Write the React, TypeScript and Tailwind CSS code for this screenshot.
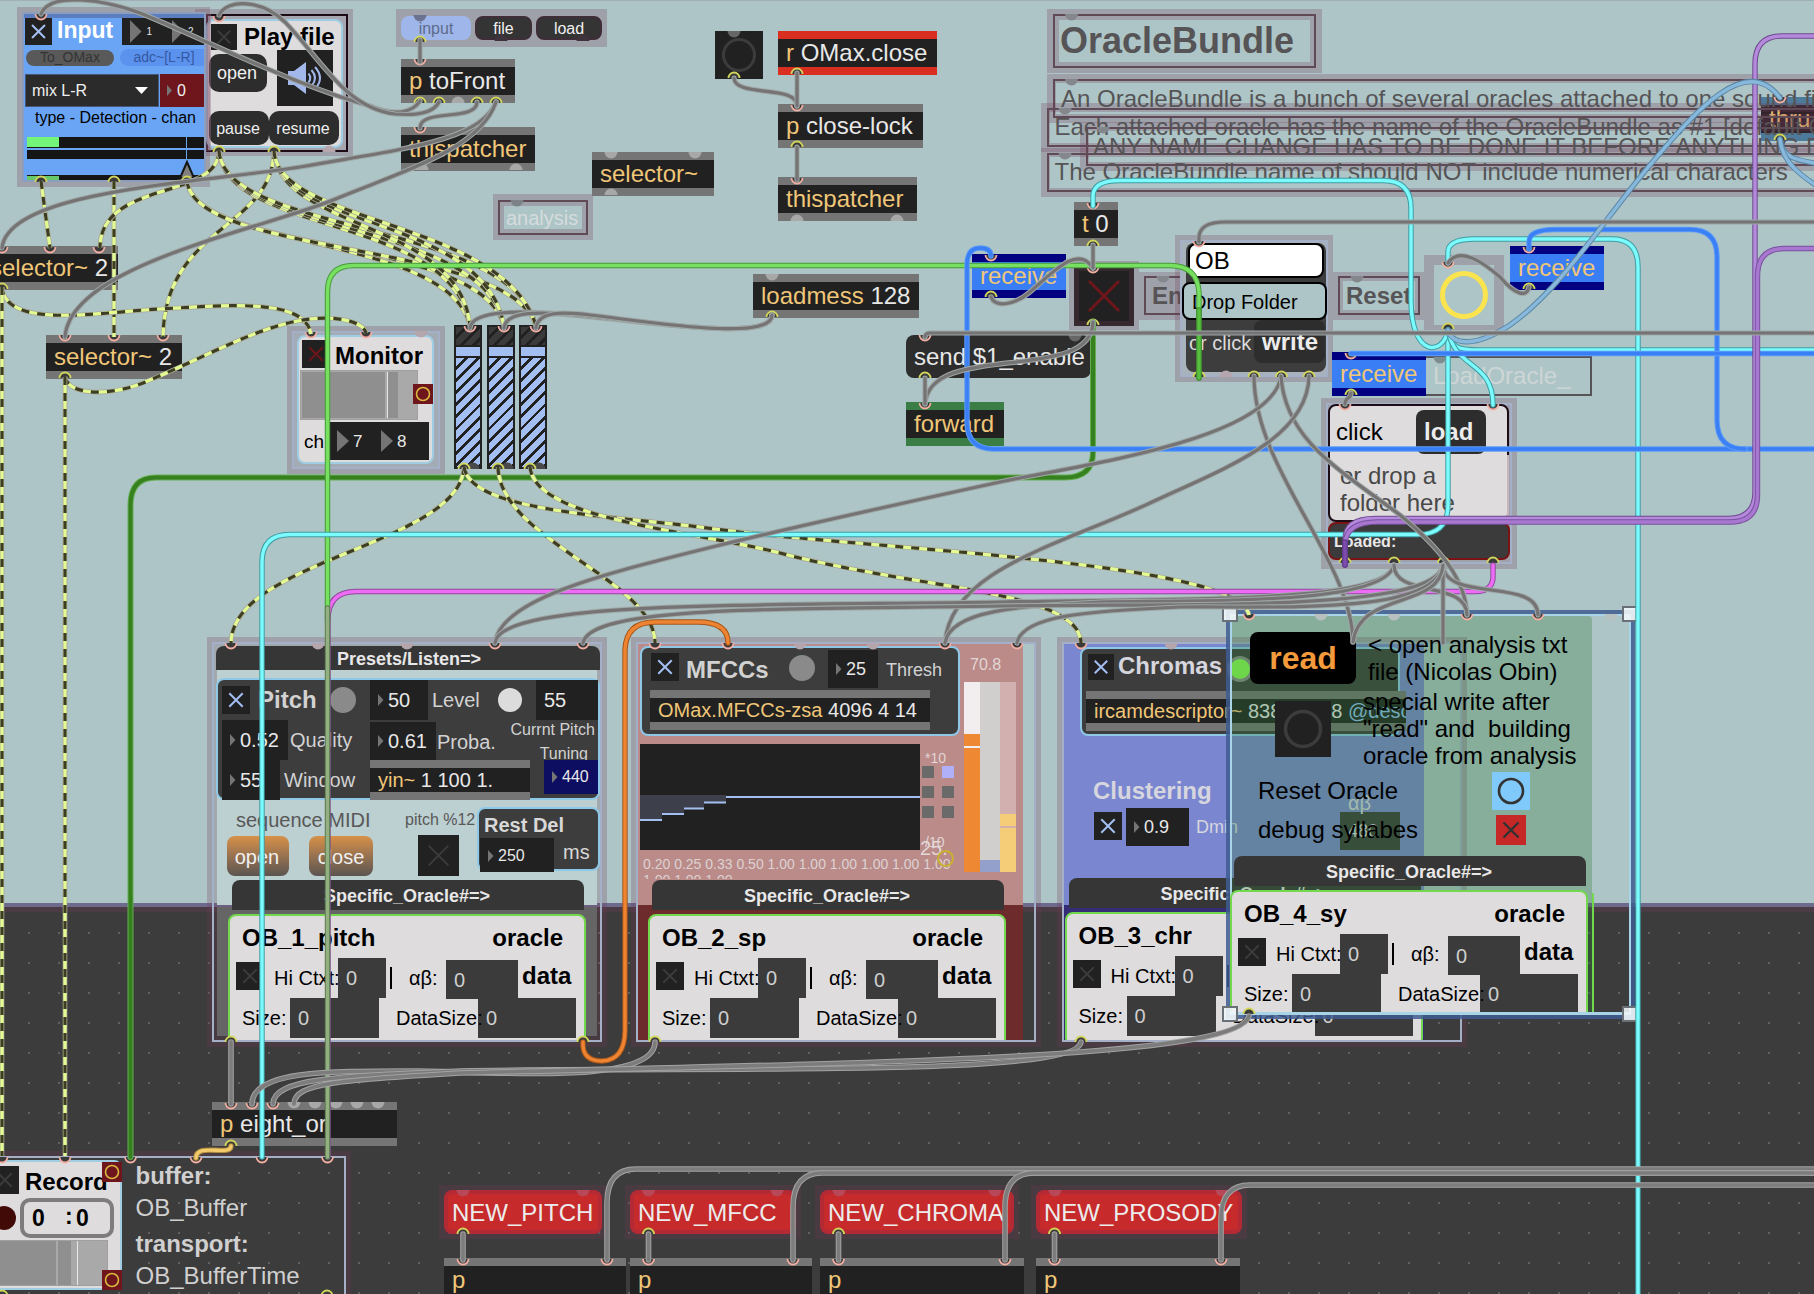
import React from "react";

type Rect = { x: number; y: number; w: number; h: number };
type Kids = { children?: React.ReactNode };

/** A node placed on the patcher canvas. */
function Node({ x, y, w, h, c = "", children }: Rect & Kids & { c?: string }) {
  return (
    <div className={"absolute " + c} style={{ left: x, top: y, width: w, height: h }}>
      {children}
    </div>
  );
}

/** A comment placed on the canvas by its left edge and baseline. */
function Comment({ x, b, s = 24, c = "text-black", children }: Kids & { x: number; b: number; s?: number; c?: string }) {
  return (
    <div className={"absolute leading-none whitespace-pre " + c} style={{ left: x, top: b + 0.3 - s * 0.8465, fontSize: s }}>
      {children}
    </div>
  );
}

/** Object body: coloured strip, name with arguments, coloured strip. */
function ObjBody({ name, args = "", args2 = "", strip = "bg-[#757575]", body = "bg-[#212121]", size = "text-[24px]" }: {
  name: string; args?: string; args2?: string; strip?: string; body?: string; size?: string;
}) {
  return (
    <div className="flex h-full w-full flex-col overflow-hidden">
      <div className={"h-2 shrink-0 " + strip} />
      <div className={"flex grow items-center pl-2 leading-none whitespace-pre text-[#f0c678] " + body + " " + size}>
        <span>{name}</span>
        <span className="text-[#e8e8e8]">{args}</span>
        {args2 && <span className="text-[#8ec0f0]">{args2}</span>}
      </div>
      <div className={"h-2 shrink-0 " + strip} />
    </div>
  );
}
function Obj({ x, y, w, ...rest }: { x: number; y: number; w: number; name: string; args?: string; strip?: string; body?: string }) {
  return (
    <Node x={x} y={y} w={w} h={44}>
      <ObjBody {...rest} />
    </Node>
  );
}

/** Translucent presentation-mode highlight around a node. */
function Halo(r: Rect) {
  return <Node {...r} c="bg-[rgba(116,56,86,0.25)]" />;
}
function HaloRing(r: Rect) {
  return (
    <Node {...r} c="border-[5px] border-[rgba(116,56,86,0.25)]">
      <div className="h-full w-full border-2 border-[#a3b0c8]" />
    </Node>
  );
}

function Toggle({ s, c = "", bg = "bg-[#212121]", on = "#3b3b3b", pad = 0.26, sw = 2 }: { s: number; c?: string; bg?: string; on?: string; pad?: number; sw?: number }) {
  const a = s * pad;
  return (
    <svg width={s} height={s} className={"block shrink-0 " + bg + " " + c}>
      <path d={`M${a} ${a}L${s - a} ${s - a}M${s - a} ${a}L${a} ${s - a}`} stroke={on} strokeWidth={sw} />
    </svg>
  );
}

function Bang({ s, c, ring, r, sw }: { s: number; c: string; ring: string; r: number; sw: number }) {
  return (
    <svg width={s} height={s} className={"block shrink-0 " + c}>
      <circle cx={s / 2} cy={s / 2} r={r} fill="none" stroke={ring} strokeWidth={sw} />
    </svg>
  );
}

/** Number box with its leading triangle. */
function Num({ v, c }: { v: string; c: string }) {
  return (
    <div className={"flex shrink-0 items-center gap-1 pl-2 leading-none text-[#e8e8e8] " + c}>
      <svg width={6} height={12} className="block shrink-0">
        <path d="M0 0l5.500 6l-5.500 6z" fill="#757575" />
      </svg>
      <span>{v}</span>
    </div>
  );
}

function Triangle({ w, h }: { w: number; h: number }) {
  return (
    <svg width={w} height={h} className="block shrink-0">
      <path d={`M0 0L${w} ${h / 2}L0 ${h}z`} fill="#757575" />
    </svg>
  );
}

/** Oracle card with its header tab, shared by the four analysis panels. */
function OracleCard({ x, y, name, h = 126 }: { x: number; y: number; name: string; h?: number }) {
  const cell = "shrink-0 bg-[#3b3b3b] pt-2.5 pl-2 text-[#cfcfcf] ";
  return (
    <Node x={x} y={y - 34} w={358} h={h + 34} c="isolate flex flex-col gap-1 overflow-hidden leading-none whitespace-pre">
      <div className="ml-1 flex h-[30px] w-[352px] shrink-0 items-center justify-center rounded-t-lg bg-[#363636] pt-0.5 pr-0.5 text-[18px] font-bold text-[#e8e8e8]">
        Specific_Oracle#=&gt;
      </div>
      <div className="h-[134px] w-[358px] shrink-0 rounded-lg border-2 border-[#74d84e] bg-[#dedcdd] text-[20px]">
        <div className="flex h-[42px] justify-between pt-2.5 pr-[21px] pl-3 text-[24px] font-bold">
          <span>{name}</span>
          <span>oracle</span>
        </div>
        <div className="flex h-10 items-start pl-1.5">
          <Toggle s={28} c="mt-1" />
          <span className="mt-2.5 ml-2.5 w-16 shrink-0">Hi Ctxt:</span>
          <div className={cell + "h-10 w-12"}>0</div>
          <div className="mt-[9px] ml-1 h-[22px] w-0.5 bg-black" />
          <span className="mt-2.5 ml-[17px] w-[37px] shrink-0">αβ:</span>
          <div className={cell + "mt-0.5 h-[39px] w-[72px]"}>0</div>
          <span className="mt-1.5 ml-1 text-[24px] font-bold">data</span>
        </div>
        <div className="flex h-10 items-start pl-3">
          <span className="mt-2.5 w-12 shrink-0">Size:</span>
          <div className={cell + "h-10 w-[89px]"}>0</div>
          <span className="z-10 mt-2.5 ml-[17px] w-[82px] shrink-0">DataSize:</span>
          <div className={cell + "h-10 w-[98px]"}>0</div>
        </div>
      </div>
    </Node>
  );
}

const DARK_BOX = "shrink-0 rounded-lg border-2 border-[#8ec8e8] bg-[#3d3d3d] ";

function InputPanel() {
  return (
    <>
      <Halo x={17} y={7} w={193} h={180} />
      <Node x={22} y={12} w={184} h={170} c="border-2 border-[#8d9dbd]" />
      <Node x={24} y={14} w={180} h={166} c="flex flex-col overflow-hidden border-t-4 border-[#5a7ec0] bg-[#6aa5f5] leading-none whitespace-pre">
        <div className="flex h-[27px] shrink-0 pl-px">
          <Toggle s={27} on="#a3bff2" />
          <span className="mt-px ml-[5px] w-[65px] shrink-0 text-[23px] font-bold text-white">Input</span>
          <div className="flex w-[82px] shrink-0 items-center bg-[#212121] pl-2 text-[10px] text-[#e8e8e8]">
            <Triangle w={11.5} h={23} />
            <span className="ml-[5px] w-[25px]">1</span>
            <Triangle w={11.5} h={23} />
            <span className="ml-[5px]">2</span>
          </div>
        </div>
        <div className="mt-1 flex h-[17px] shrink-0 gap-1.5 pl-0.5 text-[14px]">
          <div className="mt-px w-[89px] rounded-full bg-[#595959] pl-3.5 text-[#343434]">To_OMax</div>
          <div className="w-[84px] rounded-l-full bg-[#5b92ee] pt-px pl-[13px] text-[#3558a0]">adc~[L-R]</div>
        </div>
        <div className="mt-2 flex h-[33px] shrink-0 gap-px pl-px text-[16px] text-[#f0f0f0]">
          <div className="flex w-[134px] items-center justify-between border border-[#46567a] bg-[#2b2b2b] pr-2.5 pl-1.5">
            mix L-R
            <svg width={13} height={7} className="block"><path d="M0 0h13l-6.500 7z" fill="#fff" /></svg>
          </div>
          <div className="flex w-11 items-center gap-[5px] bg-[#6e161b] pl-[7px]">
            <Triangle w={5} h={11} />0
          </div>
        </div>
        <div className="h-[30px] shrink-0 pt-[3px] pl-[11px] text-[16px]">type - Detection - chan</div>
        <div className="flex shrink-0 flex-col gap-0.5 pl-[3px]">
          <div className="h-[11px] bg-[#151515]"><div className="h-2.5 w-8 bg-[#73f57a]" /></div>
          <div className="h-[9px] bg-[#151515]" />
        </div>
        <div className="mt-4 ml-[3px] h-[5px] shrink-0 bg-[#151515] pt-px"><div className="h-1 w-8 bg-[#66c868]" /></div>
      </Node>
      <Node x={179} y={137} w={16} h={43}>
        <svg width={16} height={43} className="block">
          <path d="M7.500 0v25" stroke="#6aa5f5" />
          <path d="M8 25l-7 16h14z" fill="#808080" stroke="#151515" strokeWidth={2} />
        </svg>
      </Node>
    </>
  );
}

function PlayFilePanel() {
  const btn = "flex items-center justify-center rounded-[10px] bg-[#2d2d2d] ";
  return (
    <>
      <Halo x={195} y={9} w={158} h={147} />
      <Node x={206} y={14} w={142} h={138} c="border-2 border-[#1d0c16] bg-[#a5a6b0]" />
      <Node x={206} y={19} w={137} h={129} c="rounded-lg border-2 border-[#9fcde4] bg-[#dedcdd] leading-none whitespace-pre text-[#f0f0f0]">
        <div className="flex h-[29px] gap-[7px] pt-[3px] pl-[3px]">
          <Toggle s={26} />
          <span className="pt-px text-[24px] font-bold text-black">Play file</span>
        </div>
        <div className="flex h-[61px] gap-2.5 pl-px">
          <div className={btn + "mt-1 h-[38px] w-[58px] pr-0.5 text-[18px]"}>open</div>
          <svg width={56} height={56} className="block bg-[#212121]" fill="none" stroke="#a3b8ea" strokeWidth={2}>
            <path d="M11 21h6l12-9v32l-12-9h-6z" fill="#a3b8ea" stroke="none" />
            <path d="M31.500 23.500q3.500 4.500 0 9M34.500 20q7 8 0 16M38 17q10 11 0 22" />
          </svg>
        </div>
        <div className="flex h-[34px] pl-px text-[16px]">
          <div className={btn + "w-[60px] pt-px pr-0.5"}>pause</div>
          <div className={btn + "w-[70px] pt-px pr-0.5"}>resume</div>
        </div>
      </Node>
      <Node x={206} y={14} w={5} h={137} c="bg-[rgba(150,110,130,0.4)]" />
    </>
  );
}

function MonitorPanel() {
  return (
    <>
      <Halo x={287} y={326} w={158} h={148} />
      <Node x={292} y={331} w={148} h={138} c="border-2 border-[#a3b0c8] bg-[#a3abb4]" />
      <Node x={297} y={335} w={137} h={129} c="rounded-lg border-2 border-[#9fcde4] bg-[#dedcdd] leading-none">
        <div className="flex h-[33px] gap-[5px] pt-[3px] pl-[3px]">
          <Toggle s={28} on="#6e161b" />
          <span className="pt-1 text-[24px] font-bold">Monitor</span>
        </div>
        <div className="flex h-[52px] items-start pl-px">
          <div className="flex h-[50px] w-[118px] shrink-0 border border-[#a0a0a0] bg-[#a9a9a9] p-px">
            <div className="w-[83px] bg-[#8f8f8f]" />
            <div className="w-[3px] border-r border-[#e8e8e8]" />
            <div className="w-[10px] bg-[#8f8f8f]" />
          </div>
          <div className="mt-3.5 -ml-[5px]"><Bang s={20} c="bg-[#6e161b]" ring="#d8b840" r={6.5} sw={1.6} /></div>
        </div>
        <div className="flex h-[38px] items-center pl-[5px] text-[19px]">
          <span className="w-[26px]">ch</span>
          <div className="flex h-full w-[99px] items-center bg-[#212121] pl-[7px] text-[17px] text-[#e8e8e8]">
            <Triangle w={12} h={22} />
            <span className="mt-px ml-1 w-7">7</span>
            <Triangle w={12} h={22} />
            <span className="mt-px ml-1">8</span>
          </div>
        </div>
      </Node>
    </>
  );
}

function Gain({ x }: { x: number }) {
  return (
    <Node x={x} y={325} w={28} h={144} c="flex flex-col gap-0.5 border-2 border-[#212121] bg-[#212121]">
      <div className="h-[18px] shrink-0 bg-[repeating-linear-gradient(135deg,#3a3a3a_0_6px,#212121_6px_9px)]" />
      <div className="h-[9px] shrink-0 bg-[#a3bff2]" />
      <div className="grow bg-[repeating-linear-gradient(135deg,#a3bff2_0_5.8px,#212121_5.8px_8.6px)]" />
    </Node>
  );
}

function PitchPanel() {
  const dark = "bg-[#212121] text-[20px] ";
  const btn = "flex items-center justify-center rounded-lg bg-linear-to-b from-[#d89046] to-[#5b5450] text-[20px] text-[#f0f0f0] ";
  return (
    <>
      <HaloRing x={207} y={637} w={400} h={410} />
      <Node x={214} y={644} w={386} h={396} c="bg-[rgba(116,56,86,0.2)]" />
      <Node x={217} y={650} w={380} h={386} c="flex flex-col gap-0.5">
        <div className="h-[255px] bg-[#bccfd1]" />
        <div className="grow bg-[#656565]" />
      </Node>
      <Node x={216} y={646} w={384} h={230} c="flex flex-col leading-none whitespace-pre text-[20px] text-[#d2d2d2]">
        <div className="flex h-6 shrink-0 items-center justify-center rounded-t-lg bg-[#363636] pt-0.5 pl-0.5 text-[18px] font-bold text-[#e8e8e8]">
          Presets/Listen=&gt;
        </div>
        <div className={"mt-2 h-[122px] " + DARK_BOX}>
          <div className="flex h-10 items-start pl-1">
            <Toggle s={28} on="#a3bff2" c="mt-1.5" />
            <span className="mt-2 ml-2 w-[72px] shrink-0 text-[24px] font-bold">Pitch</span>
            <div className="mt-[7px] size-[26px] shrink-0 rounded-full bg-[#8a8a8a]" />
            <div className="ml-3.5 shrink-0"><Num v="50" c={dark + "h-10 w-[58px]"} /></div>
            <span className="mt-2.5 ml-1 w-[66px] shrink-0">Level</span>
            <div className="mt-2 size-6 shrink-0 rounded-full bg-[#dcdcdc]" />
            <div className="ml-3.5 h-10 w-[62px] shrink-0 bg-[#212121] pt-2.5 pl-2 text-[#e8e8e8]">55</div>
          </div>
          <div className="flex h-20 items-start pl-1">
            <div className="w-[148px] shrink-0">
              <div className="flex items-center gap-0.5"><Num v="0.52" c={dark + "h-10 w-[66px]"} />Quality</div>
              <div className="flex items-center gap-1"><Num v="55" c={dark + "h-10 w-[58px]"} />Window</div>
            </div>
            <div className="w-40 shrink-0">
              <div className="flex h-10 items-center gap-px pt-0.5"><Num v="0.61" c={dark + "h-[38px] w-[66px]"} /><span className="pt-0.5">Proba.</span></div>
              <div className="h-10"><ObjBody name="yin~" args=" 1 100 1." size="text-[20px]" /></div>
            </div>
            <div className="flex w-[68px] shrink-0 flex-col items-end text-[16px]">
              <span className="mt-0.5 h-6 pr-[3px]">Currnt Pitch</span>
              <span className="h-3.5 pr-2.5">Tuning</span>
              <Num v="440" c="h-[34px] w-[54px] bg-[#0d0d62]" />
            </div>
          </div>
        </div>
        <div className="flex items-start text-[#585858]">
          <div className="ml-[11px] w-[177px] shrink-0">
            <div className="h-9 pt-2.5 pl-[9px]">sequence MIDI</div>
            <div className="flex h-10 gap-5">
              <div className={btn + "w-[62px] pt-0.5 pr-0.5"}>open</div>
              <div className={btn + "w-16 pt-0.5"}>close</div>
            </div>
          </div>
          <div className="w-[73px] shrink-0">
            <div className="h-[35px] pt-3 pl-px text-[16px]">pitch %12</div>
            <Toggle s={41} c="ml-3.5" />
          </div>
          <div className={"mt-[7px] h-16 w-[123px] text-[#d8d8d8] " + DARK_BOX}>
            <div className="h-[29px] pt-1.5 pl-[5px] font-bold">Rest Del</div>
            <div className="flex items-start pl-px">
              <Num v="250" c="h-[34px] w-[74px] bg-[#212121] pt-px text-[16px]" />
              <span className="mt-1 ml-[9px]">ms</span>
            </div>
          </div>
        </div>
      </Node>
      <OracleCard x={228} y={914} name="OB_1_pitch" />
    </>
  );
}

/** Steps of the coefficient display: left, width, height of the line. */
const STEPS = [[0, 22, 75], [22, 22, 69], [44, 20, 63.5], [64, 22, 57.5], [86, 194, 52]];

function MfccPanel() {
  return (
    <>
      <HaloRing x={631} y={637} w={410} h={410} />
      <Node x={638} y={644} w={385} h={396} c="flex flex-col">
        <div className="h-[261px] bg-[#ba8b89]" />
        <div className="grow bg-[#6e2b2b]" />
      </Node>
      <Node x={640} y={646} w={376} h={233} c="flex items-start gap-1 leading-none whitespace-pre text-[#e2d6d6]">
        <div className="w-80 shrink-0">
          <div className={"h-[90px] " + DARK_BOX}>
            <div className="flex h-[42px] items-start pl-[9px] text-[#d2d2d2]">
              <Toggle s={28} on="#a3bff2" c="mt-[5px]" />
              <span className="mt-2.5 ml-[7px] w-[103px] shrink-0 text-[24px] font-bold">MFCCs</span>
              <div className="mt-[7px] size-[26px] shrink-0 rounded-full bg-[#8a8a8a]" />
              <div className="mt-0.5 ml-[13px]"><Num v="25" c="h-[38px] w-[50px] bg-[#212121] text-[18px]" /></div>
              <span className="mt-[13px] ml-2 text-[18px]">Thresh</span>
            </div>
            <div className="ml-2 h-10 w-[280px]"><ObjBody name="OMax.MFCCs-zsa" args=" 4096 4 14" size="text-[20px]" /></div>
          </div>
          <div className="mt-2 flex h-[106px] items-start">
            <svg width={280} height={106} className="block shrink-0 bg-[#212121]">
              {STEPS.map(([x, w, y]) => (
                <g key={x}>
                  {y > 52 && <rect x={x} y={51} width={w} height={y - 50} fill="#3d404b" />}
                  <rect x={x} y={y} width={w} height={2} fill="#a3bff2" />
                </g>
              ))}
            </svg>
            <div className="relative w-10 shrink-0 pt-[7px] text-[14px]">
              <div className="h-[15px] pl-[5px]">*10</div>
              <div className="ml-0.5 grid w-8 grid-cols-2 gap-2">
                {[0, 1, 2, 3, 4, 5].map((i) => (
                  <div key={i} className={"size-3 " + (i === 1 ? "bg-[#b0b0f8]" : "bg-[#6a6a6a]")} />
                ))}
              </div>
              <div className="mt-[17px] pl-[5px]">/10</div>
              <div className="absolute top-[94px] left-0 text-[20px]">25.</div>
              <div className="absolute top-[106px] left-[17px] size-[17px] rounded-full border-2 border-[#c8b030]" />
            </div>
          </div>
          <div className="h-[29px] overflow-hidden pt-[7px] pl-[3px] text-[14px] leading-[14px] text-[#ddd2d2]">
            <div>0.20 0.25 0.33 0.50 1.00 1.00 1.00 1.00 1.00 1.00</div>
            <div className="pt-0.5">1.00 1.00 1.00</div>
          </div>
        </div>
        <div className="pt-[11px]">
          <div className="h-[25px] pl-1.5 text-[16px]">70.8</div>
          <div className="flex h-[190px]">
            <div className="w-4 bg-[#ef8833]">
              <div className="h-[52px] bg-[#f2eeef]" />
              <div className="mt-3 h-0.5 bg-[#f2eeef]" />
            </div>
            <div className="flex w-5 flex-col justify-end bg-[#d1cfce]"><div className="h-3 bg-[#93a0cc]" /></div>
            <div className="w-4 bg-[#f5cd78]">
              <div className="h-[132px] bg-[#d2b0af]" />
              <div className="mt-3 h-0.5 bg-[#d2b0af]" />
            </div>
          </div>
        </div>
      </Node>
      <OracleCard x={648} y={914} name="OB_2_sp" />
    </>
  );
}

function ChromaPanel() {
  return (
    <>
      <HaloRing x={1057} y={637} w={410} h={410} />
      <Node x={1064} y={644} w={360} h={396} c="flex flex-col">
        <div className="h-[261px] bg-[#7b86d0]" />
        <div className="grow bg-[#342d75]" />
      </Node>
      <Node x={1080} y={647} w={326} h={204} c="leading-none whitespace-pre text-[#d6d6de]">
        <div className={"h-[89px] w-80 " + DARK_BOX}>
          <div className="flex h-[42px] items-start pl-1.5">
            <Toggle s={26} on="#a3bff2" c="mt-[5px]" />
            <span className="mt-[5px] ml-1 w-[109px] shrink-0 text-[24px] font-bold">Chromas</span>
            <div className="mt-[7px] size-[26px] shrink-0 rounded-full border-[3px] border-[#8a8a8a] bg-[#88ff50]" />
          </div>
          <div className="ml-1 h-10 w-80"><ObjBody name="ircamdescriptor~" args=" 838 40968" args2=" @descriptors" size="text-[20px]" /></div>
        </div>
        <div className="mt-[43px] flex">
          <div className="w-[260px] pl-[13px]">
            <div className="h-[29px] text-[24px] font-bold">Clustering</div>
            <div className="flex h-[38px] items-center gap-1 pl-px">
              <Toggle s={28} on="#a3bff2" c="-mt-0.5" />
              <Num v="0.9" c="h-[38px] w-[63px] bg-[#212121] text-[18px]" />
              <span className="ml-[3px] text-[18px]">Dmin</span>
            </div>
          </div>
          <div className="w-[60px] pt-3.5">
            <div className="h-[19px] pl-2 text-[20px]">αβ</div>
            <div className="h-[38px] bg-[#3b3b3b] pt-2.5 pl-2 text-[18px]">480</div>
          </div>
        </div>
      </Node>
      <OracleCard x={1064.5} y={912} name="OB_3_chr" h={128} />
    </>
  );
}

function ProsodyPanel() {
  return (
    <>
      <Node x={1230} y={616} w={362} h={397} c="rounded bg-[rgba(50,123,62,0.31)]" />
      <Node x={1226} y={610} w={409} h={409} c="border-4 border-[rgba(62,92,145,0.85)]">
        <div className="h-full w-full border-2 border-[#a9d3e6]" />
      </Node>
      <Node x={1250} y={632} w={280} h={213} c="flex flex-col whitespace-pre text-[24px] leading-none">
        <div className="flex h-[140px] shrink-0 items-start">
          <div className="w-[106px] shrink-0">
            <div className="mb-[17px] flex h-[52px] items-center justify-center rounded-lg bg-black text-[32px] font-bold text-[#f39a3c]">read</div>
            <div className="ml-[25px]"><Bang s={56} c="bg-[#212121]" ring="#3c3c3c" r={17.5} sw={3.5} /></div>
          </div>
          <div className="-mt-px ml-1.5 leading-[27px]">
            <p className="ml-1.5">{"< open analysis txt\nfile (Nicolas Obin)"}</p>
            <p className="mt-[3px] ml-px">{"special write after\n\"read\" and  building\noracle from analysis"}</p>
          </div>
        </div>
        <div className="flex h-[38px] shrink-0 items-center justify-between pl-2">
          <span>Reset Oracle</span>
          <Bang s={38} c="bg-[#80c9fb]" ring="#333" r={12} sw={2.6} />
        </div>
        <div className="mt-[5px] flex h-[30px] shrink-0 items-center justify-between pr-1 pl-2">
          <span>debug syllabes</span>
          <Toggle s={30} bg="bg-[#c62828]" on="#333" pad={0.25} sw={2.4} />
        </div>
      </Node>
      <Node x={1592} y={893} w={2} h={120} c="bg-[#74d84e]" />
      <OracleCard x={1230} y={890} name="OB_4_sy" h={122} />
      <Node x={1232} y={1012} w={398} h={2} c="bg-[#a9d3e6]" />
      {[[1222, 606], [1622, 606], [1222, 1006], [1622, 1006]].map(([x, y]) => (
        <Node key={x + "-" + y} x={x} y={y} w={16} h={16} c="border-2 border-[#6a7078] bg-[rgba(240,246,248,0.9)]" />
      ))}
    </>
  );
}

function OraclePanel() {
  return (
    <>
      <Halo x={1175} y={235} w={158} h={147} />
      <Node x={1180} y={240} w={148} h={137} c="border-2 border-[#a3b0c8] bg-[#a8b2bb]" />
      <Node x={1186} y={243} w={140} h={129} c="flex flex-col rounded-lg bg-[#3d3d3d] leading-none whitespace-nowrap">
        <div className="ml-0.5 flex h-[35px] w-[136px] shrink-0 items-center rounded-lg border-2 border-black bg-white pl-[5px] text-[24px]">OB</div>
        <div className="mt-1 -ml-1 flex h-[38px] w-[145px] shrink-0 items-center rounded-lg border-2 border-black bg-[#adc5c6] pt-0.5 pl-2 text-[20px]">Drop Folder</div>
        <div className="flex h-11 items-start pl-[3px] text-[20px] text-[#dcdcdc]">
          <span className="w-[65px] shrink-0 pt-[13px]">or click</span>
          <div className="h-[43px] w-[71px] rounded-lg bg-[#2d2d2d] pt-2.5 pl-2 text-[24px] font-bold text-[#ececec]">write</div>
        </div>
      </Node>
    </>
  );
}

function LoadPanel() {
  return (
    <>
      <Halo x={1321} y={398} w={196} h={171} />
      <Node x={1326} y={403} w={186} h={161} c="border-2 border-[#a3b0c8]" />
      <Node x={1328} y={404} w={182} h={156} c="flex flex-col text-[24px] leading-none">
        <div className="h-[118px] w-[181px] shrink-0 rounded-lg border-2 border-[#1d0c16] bg-[#dedcdd]">
          <div className="flex h-12 items-start pt-1 pl-1.5">
            <span className="w-20 pt-2.5">click</span>
            <div className="h-11 w-[70px] rounded-lg bg-[#2d2d2d] pt-2.5 pl-2 font-bold text-[#ececec]">load</div>
          </div>
          <div className="pt-2 pl-2.5 leading-[27px] text-[#484848]">or drop a<br />folder here</div>
        </div>
        <div className="flex h-[38px] shrink-0 items-start rounded-lg border-2 border-[#7a1414] bg-[#3b3b3b] pt-2.5 pl-1 text-[16px] font-bold text-[#e8e8e8]">Loaded:</div>
      </Node>
      <Node x={1507} y={455} w={2} h={67} c="bg-[#c8b5bd]" />
    </>
  );
}

function RecordPanel() {
  return (
    <>
      <HaloRing x={-20} y={1151} w={371} h={150} />
      <Node x={-20} y={1160} w={142} h={130} c="rounded-lg border-2 border-[#9fcde4] bg-[#dedcdd] leading-none font-bold">
        <div className="flex h-[34px] items-start gap-1.5 pt-1 pl-[9px]">
          <Toggle s={28} />
          <span className="pt-1 text-[24px]">Record</span>
        </div>
        <div className="flex h-11 items-center gap-1 pl-2.5">
          <div className="size-6 shrink-0 rounded-full bg-[#420a07]" />
          <div className="flex h-10 w-[94px] shrink-0 items-center rounded-[10px] border-4 border-[#7d7d7d] pl-2 text-[23px]">
            <span className="w-[33px]">0</span>
            <span className="w-[11px] pb-1">:</span>
            <span>0</span>
          </div>
        </div>
        <div className="ml-2 flex h-[46px] w-[118px] border border-[#a0a0a0] bg-[#a9a9a9]">
          <div className="w-[65px] bg-[#8f8f8f]" />
          <div className="ml-0.5 w-[13px] bg-[#8f8f8f]" />
          <div className="ml-[6px] w-px bg-[#e8e8e8]" />
        </div>
      </Node>
      <Node x={102} y={1162} w={20} h={128} c="flex flex-col justify-between">
        <Bang s={20} c="bg-[#6e161b]" ring="#d8b840" r={6.5} sw={1.6} />
        <Bang s={20} c="bg-[#6e161b]" ring="#d8b840" r={6.5} sw={1.6} />
      </Node>
      <Node x={135.5} y={1159} w={200} h={135} c="text-[24px] leading-[34px] text-[#d0d0d0]">
        <div className="h-8 font-bold">buffer:</div>
        <div className="h-9">OB_Buffer</div>
        <div className="h-8 font-bold">transport:</div>
        <div>OB_BufferTime</div>
      </Node>
    </>
  );
}

const GRAY_TEXT = "text-[#565456]";
const COMMENT_FRAMES = [[1047, 74, 79], [1041, 103, 108], [1080, 122, 127], [1041, 148, 153]];

function Comments() {
  return (
    <>
      <Halo x={1047} y={9} w={275} h={64} />
      <Node x={1053} y={14} w={263} h={54} c="border-2 border-[#5f4a55] p-1">
        <div className="flex h-full w-full items-center bg-[#adc5c6] pl-px text-[36px] leading-none font-bold text-[#565456]">OracleBundle</div>
      </Node>
      {COMMENT_FRAMES.map(([x, y, fy]) => (
        <React.Fragment key={fy}>
          <Node x={x} y={y} w={860} h={49} c="border-[9px] border-[rgba(116,56,86,0.25)]" />
          <Node x={x + 6} y={fy} w={850} h={39} c="border-2 border-[#5f4a55]" />
        </React.Fragment>
      ))}
      <Comment x={1061} b={107} c={GRAY_TEXT}>An OracleBundle is a bunch of several oracles attached to one sound file</Comment>
      <Comment x={1054.5} b={135.5} c={GRAY_TEXT}>Each attached oracle has the name of the OracleBundle as #1 [default OB]</Comment>
      <Comment x={1093} b={155} c={GRAY_TEXT}>ANY NAME CHANGE HAS TO BE DONE IT BEFORE ANYTHING ELSE</Comment>
      <Comment x={1054.5} b={180} c={GRAY_TEXT}>The OracleBundle name of should NOT include numerical characters</Comment>
    </>
  );
}

const NEW_BUTTONS = [
  { x: 444, w: 158, t: "NEW_PITCH" },
  { x: 630, w: 166, t: "NEW_MFCC" },
  { x: 820, w: 194, t: "NEW_CHROMA" },
  { x: 1036, w: 206, t: "NEW_PROSODY" },
];

const BLUE = { strip: "bg-[#000080]", body: "bg-[#3a7ef5]" };
const OBJECTS = [
  { x: 401, y: 59, w: 114, name: "p", args: " toFront" },
  { x: 401, y: 126.5, w: 134, name: "thispatcher" },
  { x: 592, y: 151.5, w: 122, name: "selector~" },
  { x: 778, y: 31, w: 159, name: "r", args: " OMax.close", strip: "bg-[#da2e20]" },
  { x: 778, y: 104, w: 145, name: "p", args: " close-lock" },
  { x: 778, y: 177, w: 139, name: "thispatcher" },
  { x: 753, y: 274, w: 166, name: "loadmess", args: " 128" },
  { x: 1761, y: 96.5, w: 90, name: "thru", strip: "bg-[#4d7a9a]", body: "bg-[#33242c]" },
];
const OBJECTS_TOP = [
  { x: 1074, y: 202, w: 44, name: "t", args: " 0" },
  { x: 972, y: 254, w: 94, name: "receive", ...BLUE },
  { x: 1510, y: 246, w: 94, name: "receive", ...BLUE },
  { x: 906, y: 402, w: 98, name: "forward", strip: "bg-[#3a7d45]" },
  { x: 212, y: 1102, w: 185, name: "p", args: " eight_or" },
  { x: 444, y: 1258, w: 182, name: "p" },
  { x: 630, y: 1258, w: 182, name: "p" },
  { x: 820, y: 1258, w: 204, name: "p" },
  { x: 1036, y: 1258, w: 204, name: "p" },
];

/* Patch cords */
const GRAY = [
  "M41 14C50 -9 105 0 140 13C200 37 290 84 370 106C395 117 413 112 420 101",
  "M219 15C228 -2 262 0 285 22C320 58 345 108 395 114C420 116 434 112 439 102",
  "M477 102C477 122 420 108 420 128",
  "M496 102C480 142 400 149 300 167C200 183 8 190 2 248",
  "M496 102C480 150 400 172 333 200C260 230 70 265 65 337",
  "M420 40V62", "M734 78C735 98 797 84 797 106", "M797 73V106", "M797 147V180",
  "M772 315C772 342 650 322 570 315C520 310 472 310 470 328",
  "M772 315C772 342 650 322 580 315C540 312 506 310 504 328",
  "M772 315C772 342 650 322 590 315C560 311 538 312 536 328",
  "M991 297C995 308 1015 305 1030 292C1055 270 1078 245 1093 268",
  "M1093 245V268", "M1093 322C1092 385 930 340 925 404", "M925 378V404",
  "M925 337Q925 333 930 333H1820",
  "M1199 242V238Q1199 222 1225 222H1820",
  "M1448 263C1460 245 1485 264 1500 277C1515 295 1527 298 1529 287",
  "M1351 393C1351 400 1345 396 1345 404",
  "M1254 376C1254 470 1352 560 1353 642",
  "M1281 376C1272 440 1080 465 1000 482C880 508 760 535 700 550C600 575 500 600 495 643",
  "M1281 376C1285 440 1340 470 1400 515C1440 548 1466 580 1467 615",
  "M1309 376C1308 440 1220 470 1150 503C1060 545 950 570 945 643",
  "M1394 565C1385 603 1200 598 1000 602C750 606 500 600 495 643",
  "M1394 565C1385 606 1200 600 1100 602C1020 606 950 610 945 643",
  "M1394 565C1394 598 1467 580 1467 615",
  "M1443 565C1435 612 1200 603 1000 606C780 610 590 605 583 643",
  "M1443 565C1435 615 1280 606 1180 607C1090 611 1022 615 1017 643",
  "M1443 565C1445 603 1538 577 1538 615",
  "M1443 565V643", "M1443 565C1440 610 1360 590 1353 642",
];
const GRAY_LOW = [
  "M231 1042V1104",
  "M655 1042C655 1085 500 1072 420 1071C330 1071 252 1070 252 1104",
  "M1081 1042C1078 1078 700 1066 460 1071C340 1076 273 1078 273 1104",
  "M1249 1016C1238 1058 900 1062 460 1073C340 1080 294 1083 294 1104",
  "M607 1260V1203Q607 1169 636 1169H1820",
  "M793 1260V1207Q793 1173 822 1173H1820",
  "M1005 1260V1207Q1005 1173 1034 1173H1820",
  "M1221 1260V1219Q1221 1185 1250 1185H1820",
  "M463 1234V1260", "M648.5 1234V1260", "M838.5 1234V1260", "M1054.5 1234V1260",
];
const SIGNAL = [
  "M41 181L50 248", "M114 181V337",
  "M219 151C218 200 100 180 100 248",
  "M274 151C272 230 165 225 163 337",
  "M187 181C195 250 450 235 470 326", "M187 181C195 255 480 235 504 326", "M187 181C195 258 510 240 536 326",
  "M219 151C225 235 455 215 470 326", "M219 151C225 235 485 220 504 326", "M219 151C225 235 510 220 536 326",
  "M274 151C278 230 460 220 470 326", "M274 151C278 230 485 215 504 326", "M274 151C278 225 505 220 536 326",
  "M2 287C5 330 100 312 160 309C230 305 305 298 311 334", "M2 287V1156",
  "M65 377C68 395 110 398 150 380C210 355 260 325 310 319C345 315 365 325 366 333", "M65 377V1156",
  "M464 467C460 545 232 560 231 643",
  "M464 467C470 510 600 515 700 527C850 549 1240 560 1249 615",
  "M498 467C500 540 655 580 655 643",
  "M530 467C535 520 690 530 780 553C920 590 1080 590 1081 643",
];
const CYAN = { c: "#7bfbfd", e: "#3f9da3" };
const AZURE = { c: "#3a7ff5", e: "#5c9cf8" };
const SKY = { c: "#88b8dc", e: "#5b88a5" };
const COLORED = [
  { d: "M1093 322V452Q1093 477.5 1065 477.5H156Q130.5 477.5 130.5 505V1157", c: "#37801f", e: "#62ad50" },
  { d: "M1493 565V578Q1492 591.5 1475 591.5H356Q328 591.5 328 620V1157", c: "#ee6cf5", e: "#8c4a98" },
  { d: "M1199 378V292Q1197 265.5 1170 265.5H354Q327.5 265.5 327.5 292V620", c: "#78e060", e: "#479a3c" },
  { d: "M327.5 608V1157", c: "#92b082", e: "#5c7a50" },
  { d: "M1199 310V378", c: "#58bf40", e: "#3d8c2c" },
  { d: "M1448 330V505Q1448 534.5 1418 534.5H290Q262 534.5 262 562V1157", ...CYAN },
  { d: "M1093 206V196Q1093 180.5 1120 180.5H1383Q1411 180.5 1411 208V300C1411 357 1443 357 1448 330", ...CYAN },
  { d: "M1448 330C1452 347 1455 350 1480 350H1820", ...CYAN },
  { d: "M1448 330C1455 370 1493 360 1493 405", ...CYAN },
  { d: "M1448 263V252Q1448 239 1475 239H1612Q1638 239 1638 267V1300", ...CYAN },
  { d: "M991 256Q991 248 980 248Q967 248 967 265V422Q967 449 994 449H1820", ...AZURE },
  { d: "M1529 249V242Q1529 229.5 1555 229.5H1690Q1717 229.5 1717 257V420Q1717 449 1745 449", ...AZURE },
  { d: "M1351 353.5H1820", ...AZURE },
  { d: "M1820 36H1782Q1755 36 1755 64V492Q1755 518.5 1728 518.5H1375Q1345 518.5 1345 540V565", c: "#b589dc", e: "#6d4a8e" },
  { d: "M1820 248.5H1784Q1757.5 248.5 1757.5 276V495Q1757.5 522 1730 522H1378Q1345 522 1345 545V565", c: "#a878d0", e: "#7a50a0" },
  { d: "M1345 542V565", c: "#7c4cae", e: "#5d3888" },
  { d: "M1448 330C1452 345 1475 348 1510 325C1560 290 1600 225 1650 165C1690 118 1745 50 1780 98", ...SKY },
  { d: "M1780 139C1782 158 1795 160 1820 164", ...SKY },
  { d: "M1780 139C1782 162 1800 175 1820 188", ...SKY },
  { d: "M583 1042V1046Q584 1061 602 1061Q625 1060 625 1030V650Q626 622 655 622H698Q728 622 728 643", c: "#ee8432", e: "#a4561a" },
  { d: "M231 1146C231 1157 196 1142 196 1158", c: "#f2ca6c", e: "#b08c3c" },
];

const INLETS = [
  [41, 14], [219, 16], [420, 59], [420, 127], [797, 105], [797, 178], [2, 247], [50, 247], [99, 247], [65, 335], [114, 335], [163, 335],
  [311, 332], [366, 332], [470, 326], [504, 326], [536, 326], [1093, 203], [991, 255], [1093, 267], [925, 335], [925, 403], [1199, 241],
  [1351, 353], [1529, 247], [1448, 262], [1345, 404], [1493, 404], [1780, 97], [231, 643], [495, 643], [583, 643], [655, 643], [728, 643],
  [945, 643], [1017, 643], [1081, 643], [1249, 614], [1467, 614], [1538, 614], [231, 1103], [252, 1103], [273, 1103], [2, 1157], [65, 1157],
  [130.5, 1157], [196, 1157], [262, 1157], [327.5, 1157], [463, 1259], [607, 1259], [648.5, 1259], [793, 1259], [838.5, 1259], [1005, 1259],
  [1054.5, 1259], [1221, 1259],
];
const OUTLETS = [
  [41, 182], [114, 182], [187, 182], [219, 152], [274, 152], [420, 42], [420, 103], [439, 103], [477, 103], [496, 103], [734, 78], [797, 74],
  [797, 147], [2, 289], [65, 378], [464, 469], [498, 469], [530, 469], [772, 317], [1093, 246], [991, 297], [1093, 325], [925, 378],
  [1199, 377], [1254, 377], [1281.5, 377], [1309, 377], [1351, 395], [1529, 289], [1448, 329], [1345, 563], [1394, 563], [1443.5, 563],
  [1493, 563], [1780, 140], [231, 1042], [583, 1042], [655, 1042], [1081, 1042], [1249, 1014], [231, 1146], [463, 1234], [648.5, 1234],
  [838.5, 1234], [1054.5, 1234], [2, 1296], [327, 1296],
];
/* Unconnected ports: x, y, facing down (1) or up (0), fill */
const IDLE: [number, number, number, string][] = [
  [420, 15, 1, "#6b7390"], [501, 41, 0, "#40343c"], [583, 41, 0, "#40343c"], [458, 103, 0, "#a8a8a8"], [422, 170, 0, "#a8a8a8"], [516, 170, 0, "#a8a8a8"], [734, 31, 1, "#666"],
  [611, 152, 1, "#a8a8a8"], [695, 152, 1, "#a8a8a8"], [611, 195, 0, "#a8a8a8"], [797, 221, 0, "#a8a8a8"], [897, 221, 0, "#a8a8a8"],
  [517, 200, 1, "#7d8289"], [772, 274, 1, "#a8a8a8"], [421, 331, 1, "#b5a5ad"], [329, 152, 0, "#b5a5ad"], [1071.5, 14, 1, "#84878c"],
  [1071.5, 79, 1, "#84878c"], [1065, 108, 1, "#84878c"], [1103, 127, 1, "#84878c"], [1065, 153, 1, "#84878c"], [1163, 276, 1, "#84878c"],
  [1357, 276, 1, "#84878c"], [1440, 357, 1, "#7d8c8d"], [1075, 335, 1, "#666"], [1226, 377, 0, "#b5a5ad"], [318, 643, 1, "#b5a5ad"],
  [407, 643, 1, "#b5a5ad"], [800, 643, 1, "#b5a5ad"], [873, 643, 1, "#b5a5ad"], [1171, 643, 1, "#b5a5ad"], [1321, 614, 1, "#b8c0c0"],
  [1394, 614, 1, "#b8c0c0"], [1611, 614, 1, "#b8c0c0"], [294, 1102, 1, "#a8a8a8"], [315, 1102, 1, "#a8a8a8"], [336, 1102, 1, "#a8a8a8"],
  [357, 1102, 1, "#a8a8a8"], [378, 1102, 1, "#a8a8a8"], [463, 1190, 1, "#b84858"], [583, 1190, 1, "#b84858"], [648.5, 1190, 1, "#b84858"],
  [777, 1190, 1, "#b84858"], [839, 1190, 1, "#b84858"], [995, 1190, 1, "#b84858"], [1055, 1190, 1, "#b84858"], [1222, 1190, 1, "#b84858"],
  [473, 469, 0, "#4a4a4a"], [507, 469, 0, "#4a4a4a"], [539, 469, 0, "#4a4a4a"],
];

function Cord({ d, c, e, w = 4 }: { d: string; c: string; e: string; w?: number }) {
  return (
    <>
      <path d={d} stroke={e} strokeWidth={w + 2} />
      <path d={d} stroke={c} strokeWidth={w} />
    </>
  );
}

function Cords() {
  return (
    <svg width={1814} height={1294} className="pointer-events-none absolute inset-0 block" fill="none" strokeLinecap="round">
      {IDLE.map(([x, y, down, f], i) => (
        <path key={i} d={`M${x - 6.5} ${y}a6.5 6.5 0 0 ${down ? 0 : 1} 13 0z`} fill={f} />
      ))}
      {INLETS.map(([x, y], i) => (
        <path key={i} d={`M${x - 5.5} ${y}a5.5 5.5 0 0 0 11 0`} fill="#3a3a3a" stroke="#f2aea2" strokeWidth={1.8} strokeLinecap="butt" />
      ))}
      {OUTLETS.map(([x, y], i) => (
        <path key={i} d={`M${x - 5.5} ${y}a5.5 5.5 0 0 1 11 0`} fill="#3a3a3a" stroke="#d2d75c" strokeWidth={1.8} strokeLinecap="butt" />
      ))}
      {COLORED.slice(0, 1).map((p) => <Cord key={p.d} {...p} />)}
      {SIGNAL.map((d) => (
        <g key={d} strokeLinecap="butt">
          <path d={d} stroke="#a9a39a" strokeWidth={4.6} />
          <path d={d} stroke="#e3fc92" strokeWidth={3.2} />
          <path d={d} stroke="#3c3d24" strokeWidth={3.2} strokeDasharray="8 8" />
        </g>
      ))}
      {COLORED.slice(1).map((p) => <Cord key={p.d} {...p} w={3.4} />)}
      {GRAY.map((d) => <Cord key={d} d={d} c="#757373" e="#9fa7a7" w={3.2} />)}
      {GRAY_LOW.map((d) => <Cord key={d} d={d} c="#7c7c7c" e="#a3a3a3" w={3.6} />)}
    </svg>
  );
}

export default function App() {
  return (
    <div className="relative h-[1294px] w-[1814px] overflow-hidden bg-[#adc5c6] font-['Liberation_Sans',Arial,sans-serif]">
      <div className="flex h-full flex-col">
        <div className="h-[903px] shrink-0 border-t border-[#9fb0b8]" />
        <div className="h-1 shrink-0 bg-[#6d6a8b]" />
        <div className="h-[5px] shrink-0 bg-[#4b3b44]" />
        <div className="grow bg-[#3c3c3c] bg-[radial-gradient(circle_at_29px_21px,#606060_1px,transparent_1.3px)] bg-size-[30px_30px]" />
      </div>

      <Obj x={-18} y={246} w={136} name="selector~" args=" 2" />
      <Obj x={46} y={335} w={136} name="selector~" args=" 2" />
      <PlayFilePanel />
      <InputPanel />
      <MonitorPanel />
      <Gain x={454} />
      <Gain x={487} />
      <Gain x={519} />

      <Halo x={396} y={9} w={211} h={38} />
      <Node x={401} y={16} w={201} h={24} c="flex gap-1 text-center text-[16px] leading-[25px] text-[#f0f0f0]">
        <div className="w-[70px] rounded-lg bg-[#9fb6ea] text-[#5e6b8a]">input</div>
        <div className="w-[57px] rounded-lg border-2 border-[#3f2d37] bg-[#343434] leading-[21px]">file</div>
        <div className="w-[66px] rounded-lg border-2 border-[#3f2d37] bg-[#343434] leading-[21px]">load</div>
      </Node>
      <Halo x={493} y={194} w={100} h={46} />
      <Node x={498} y={200} w={90} h={35} c="border-2 border-[#5f4a55] p-1">
        <div className="flex h-full w-full items-center bg-[#adc5c6] pl-0.5 text-[20px] leading-none text-[#d5dcdd]">analysis</div>
      </Node>
      <Node x={715} y={31} w={48} h={48}>
        <Bang s={48} c="bg-[#212121]" ring="#3c3c3c" r={15.5} sw={3} />
      </Node>
      {OBJECTS.map((o) => <Obj key={o.x + "-" + o.y} {...o} />)}
      <Comments />

      <Halo x={1139} y={272} w={60} h={48} />
      <Node x={1144} y={276} w={60} h={39} c="flex items-center border-2 border-[#5f4a55] pt-px pl-1.5 text-[24px] leading-none font-bold text-[#565456]">En</Node>
      <Halo x={1069} y={261} w={70} h={69} />
      <Node x={1074} y={266} w={60} h={60} c="bg-[#36282f] p-[5px]">
        <Toggle s={50} on="#6e161b" pad={0.2} sw={3} />
      </Node>
      <Node x={906} y={335} w={185} h={43} c="flex items-center rounded-lg bg-[#2d2d2d] pl-2 text-[24px] leading-none whitespace-pre text-[#e8e8e8]">send $1_enable</Node>
      {OBJECTS_TOP.map((o) => <Obj key={o.x + "-" + o.y} {...o} />)}

      <OraclePanel />
      <Halo x={1333} y={272} w={91} h={48} />
      <Node x={1338} y={276} w={82} h={39} c="border-2 border-[#5f4a55] p-[3px]">
        <div className="flex h-full w-full items-center bg-[#adc5c6] pt-px pl-[3px] text-[24px] leading-none font-bold text-[#565456]">Reset</div>
      </Node>
      <Halo x={1424} y={255} w={80} h={75} />
      <Node x={1434} y={265} w={60} h={60}>
        <Bang s={60} c="bg-[#adc5c6]" ring="#fbe44d" r={21.5} sw={5} />
      </Node>
      <Node x={1424} y={356} w={168} h={40} c="flex items-center border-2 border-[#565456] pl-[7px] text-[24px] leading-none text-[#cdd6d6]">LoadOracle_</Node>
      <Obj x={1332} y={352} w={94} name="receive" {...BLUE} />
      <LoadPanel />

      <PitchPanel />
      <MfccPanel />
      <ChromaPanel />
      <ProsodyPanel />

      <RecordPanel />
      {NEW_BUTTONS.map((n) => (
        <Node key={n.t} x={n.x - 5} y={1185} w={n.w + 10} h={54} c="bg-[rgba(116,56,86,0.25)] p-[5px]">
          <div className="flex h-full items-center rounded-lg border-4 border-[#b32a34] bg-[#c72a2a] pt-px pl-1 text-[24px] leading-none text-[#ececec]">{n.t}</div>
        </Node>
      ))}
      <Cords />
    </div>
  );
}
